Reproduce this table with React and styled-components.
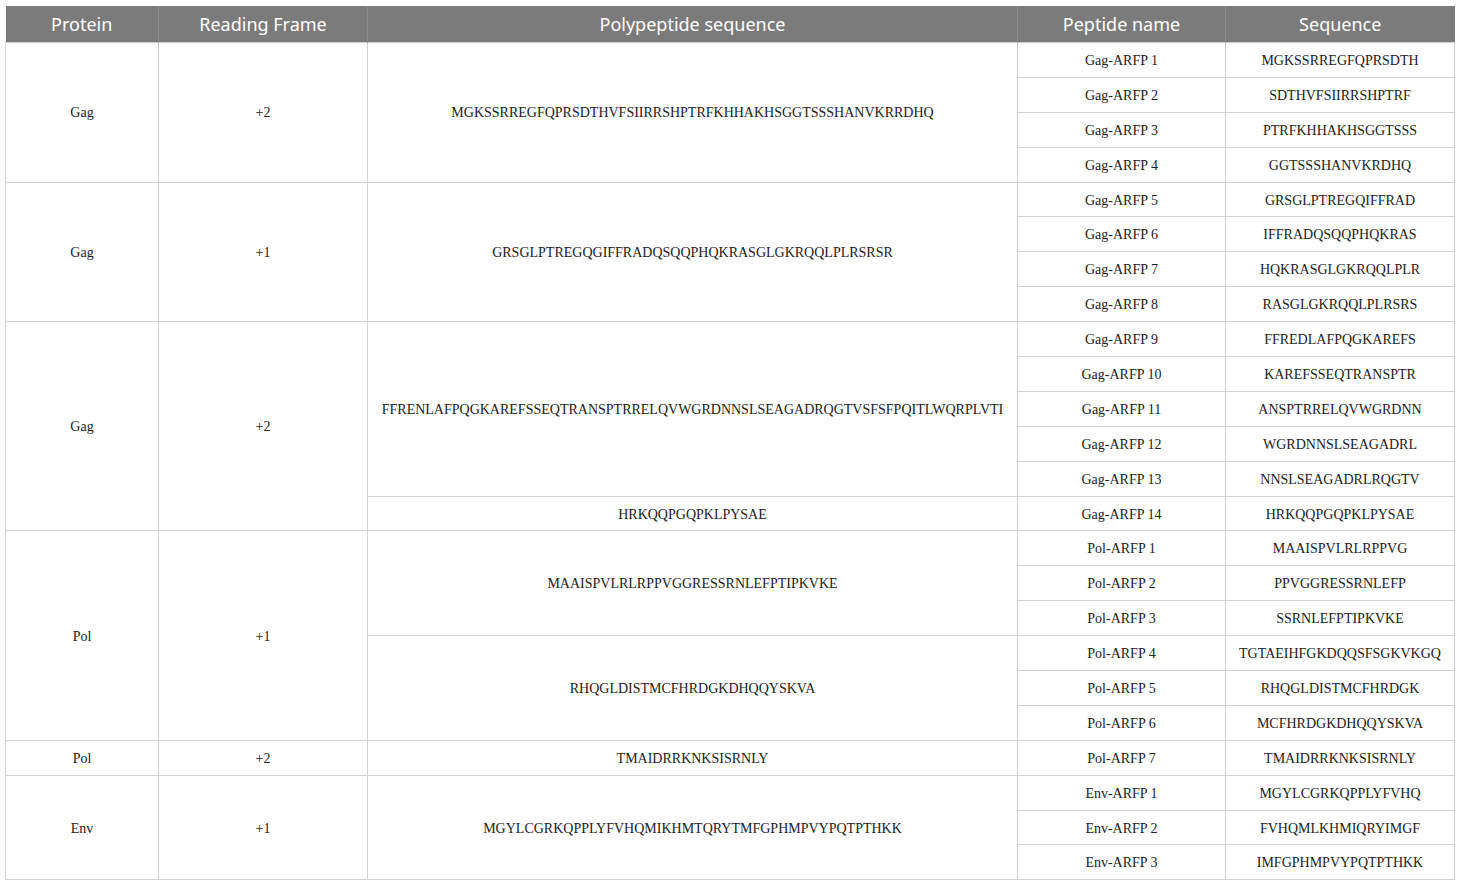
import styled, { createGlobalStyle } from "styled-components";

const GlobalStyle = createGlobalStyle`
  body {
    margin: 0;
    padding: 6px 5px;
    background: #ffffff;
  }
`;

const Table = styled.table`
  width: 1449px;
  border-collapse: collapse;
  table-layout: fixed;
  font-family: "Liberation Serif", "Times New Roman", serif;
  color: #222222;
`;

const HeadCell = styled.th`
  height: 36px;
  padding: 0;
  background: #7b7b7b;
  color: #ffffff;
  font-family: "Noto Sans", "Open Sans", sans-serif;
  font-size: 18px;
  font-weight: 400;
  text-align: center;
  border-left: 1px solid #8c8c8c;
  &:first-child {
    border-left: none;
  }
`;

const Row = styled.tr`
  height: 34.9px;
`;

const Cell = styled.td`
  padding: 2px 6px 0;
  font-size: 14px;
  text-align: center;
  vertical-align: middle;
  border: 1px solid #d2d2d2;
  white-space: nowrap;
`;

const columns = [
  { title: "Protein", width: 153 },
  { title: "Reading Frame", width: 209 },
  { title: "Polypeptide sequence", width: 650 },
  { title: "Peptide name", width: 208 },
  { title: "Sequence", width: 229 },
];

// one entry per protein block; each polypeptide lists its peptides
const groups = [
  {
    protein: "Gag",
    frame: "+2",
    polys: [
      {
        seq: "MGKSSRREGFQPRSDTHVFSIIRRSHPTRFKHHAKHSGGTSSSHANVKRRDHQ",
        peptides: [
          ["Gag-ARFP 1", "MGKSSRREGFQPRSDTH"],
          ["Gag-ARFP 2", "SDTHVFSIIRRSHPTRF"],
          ["Gag-ARFP 3", "PTRFKHHAKHSGGTSSS"],
          ["Gag-ARFP 4", "GGTSSSHANVKRDHQ"],
        ],
      },
    ],
  },
  {
    protein: "Gag",
    frame: "+1",
    polys: [
      {
        seq: "GRSGLPTREGQGIFFRADQSQQPHQKRASGLGKRQQLPLRSRSR",
        peptides: [
          ["Gag-ARFP 5", "GRSGLPTREGQIFFRAD"],
          ["Gag-ARFP 6", "IFFRADQSQQPHQKRAS"],
          ["Gag-ARFP 7", "HQKRASGLGKRQQLPLR"],
          ["Gag-ARFP 8", "RASGLGKRQQLPLRSRS"],
        ],
      },
    ],
  },
  {
    protein: "Gag",
    frame: "+2",
    polys: [
      {
        seq: "FFRENLAFPQGKAREFSSEQTRANSPTRRELQVWGRDNNSLSEAGADRQGTVSFSFPQITLWQRPLVTI",
        peptides: [
          ["Gag-ARFP 9", "FFREDLAFPQGKAREFS"],
          ["Gag-ARFP 10", "KAREFSSEQTRANSPTR"],
          ["Gag-ARFP 11", "ANSPTRRELQVWGRDNN"],
          ["Gag-ARFP 12", "WGRDNNSLSEAGADRL"],
          ["Gag-ARFP 13", "NNSLSEAGADRLRQGTV"],
        ],
      },
      {
        seq: "HRKQQPGQPKLPYSAE",
        peptides: [["Gag-ARFP 14", "HRKQQPGQPKLPYSAE"]],
      },
    ],
  },
  {
    protein: "Pol",
    frame: "+1",
    polys: [
      {
        seq: "MAAISPVLRLRPPVGGRESSRNLEFPTIPKVKE",
        peptides: [
          ["Pol-ARFP 1", "MAAISPVLRLRPPVG"],
          ["Pol-ARFP 2", "PPVGGRESSRNLEFP"],
          ["Pol-ARFP 3", "SSRNLEFPTIPKVKE"],
        ],
      },
      {
        seq: "RHQGLDISTMCFHRDGKDHQQYSKVA",
        peptides: [
          ["Pol-ARFP 4", "TGTAEIHFGKDQQSFSGKVKGQ"],
          ["Pol-ARFP 5", "RHQGLDISTMCFHRDGK"],
          ["Pol-ARFP 6", "MCFHRDGKDHQQYSKVA"],
        ],
      },
    ],
  },
  {
    protein: "Pol",
    frame: "+2",
    polys: [
      {
        seq: "TMAIDRRKNKSISRNLY",
        peptides: [["Pol-ARFP 7", "TMAIDRRKNKSISRNLY"]],
      },
    ],
  },
  {
    protein: "Env",
    frame: "+1",
    polys: [
      {
        seq: "MGYLCGRKQPPLYFVHQMIKHMTQRYTMFGPHMPVYPQTPTHKK",
        peptides: [
          ["Env-ARFP 1", "MGYLCGRKQPPLYFVHQ"],
          ["Env-ARFP 2", "FVHQMLKHMIQRYIMGF"],
          ["Env-ARFP 3", "IMFGPHMPVYPQTPTHKK"],
        ],
      },
    ],
  },
];

const App = () => {
  const rows = [];
  groups.forEach((g, gi) => {
    const total = g.polys.reduce((n, p) => n + p.peptides.length, 0);
    g.polys.forEach((p, pi) => {
      p.peptides.forEach(([name, seq], ki) => {
        const first = pi === 0 && ki === 0;
        rows.push(
          <Row key={`${gi}-${pi}-${ki}`}>
            {first && <Cell rowSpan={total}>{g.protein}</Cell>}
            {first && <Cell rowSpan={total}>{g.frame}</Cell>}
            {ki === 0 && <Cell rowSpan={p.peptides.length}>{p.seq}</Cell>}
            <Cell>{name}</Cell>
            <Cell>{seq}</Cell>
          </Row>
        );
      });
    });
  });

  return (
    <>
      <GlobalStyle />
      <Table>
        <colgroup>
          {columns.map((c) => (
            <col key={c.title} style={{ width: c.width }} />
          ))}
        </colgroup>
        <thead>
          <tr>
            {columns.map((c) => (
              <HeadCell key={c.title}>{c.title}</HeadCell>
            ))}
          </tr>
        </thead>
        <tbody>{rows}</tbody>
      </Table>
    </>
  );
};

export default App;
